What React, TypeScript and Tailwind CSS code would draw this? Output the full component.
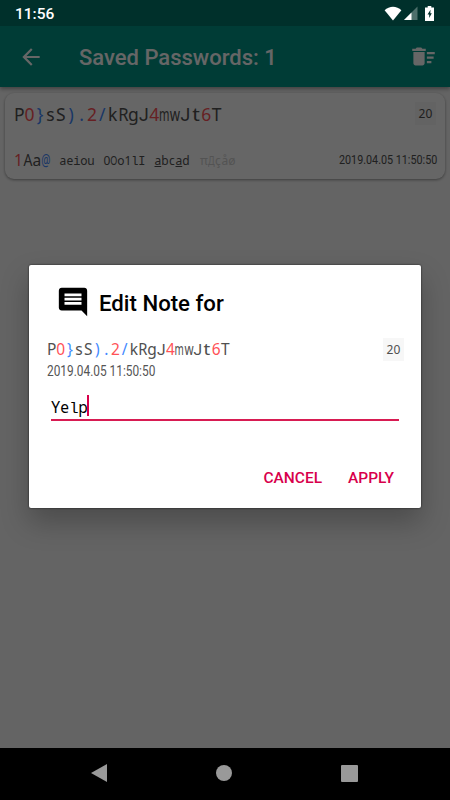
import clsx from "clsx";

const PASSWORD = "P0}sS).2/kRgJ4mwJt6T";

function colorOf(ch: string) {
  if (/[0-9]/.test(ch)) return "text-[#ff5257]";
  if (/[a-zA-Z]/.test(ch)) return "text-[#505050]";
  return "text-[#4389ff]";
}

// wide letters are narrowed so that they stay inside their cell
function shapeOf(ch: string) {
  if (/[lIi]/.test(ch)) return "font-['Liberation_Mono',monospace]";
  if (ch === "J") return "font-[Roboto,sans-serif]";
  if (ch === "m") return "scale-x-[0.64]";
  if (ch === "@") return "scale-x-[0.66]";
  if (/[wOД]/.test(ch)) return "scale-x-[0.75]";
  if (ch === "A") return "scale-x-[0.9]";
  if (ch === "R") return "scale-x-[0.95]";
  if (ch === "t") return "scale-x-[1.2]";
  return "";
}

// every glyph sits in a cell of the same width
function Mono({ text, cell, colored }: { text: string; cell: string; colored?: boolean }) {
  return (
    <span className="flex items-baseline font-['Noto_Sans',sans-serif]">
      {text.split("").map((ch, i) => (
        <span key={i} className={clsx("flex items-baseline justify-center", cell, colored && colorOf(ch))}>
          <span className={clsx("inline-block", shapeOf(ch))}>{ch}</span>
        </span>
      ))}
    </span>
  );
}

function LengthBadge() {
  return (
    <span className="flex h-[23px] w-[21px] items-center justify-center bg-[#f7f7f7] text-[12px] text-[#505050]">
      <Mono text="20" cell="w-[7px]" />
    </span>
  );
}

function StatusBar() {
  return (
    <div className="absolute inset-x-0 top-0 flex h-[26px] items-center justify-between px-[15px]">
      <span className="pt-[2px] text-[15.5px] font-medium leading-[26px] text-white">11:56</span>
      <div className="flex items-center">
        <svg className="h-[15px] w-[18px]" viewBox="0 0 18 15">
          <path d="M9 14.5 0.6 4.2C2.8 2 6 .8 9 .8s6.2 1.2 8.4 3.4z" fill="#fff" />
        </svg>
        <svg className="ml-px h-[15px] w-[15px]" viewBox="0 0 15 15">
          <path d="M14.5 0.5V14H1z" fill="#4d6f6b" />
          <path d="M8.5 6.5V14H1z" fill="#fff" />
        </svg>
        <svg className="ml-[7px] mr-px h-[15px] w-[9px]" viewBox="0 0 9 15">
          <path d="M2.7 0h3.6v1.5H9V15H0V1.5h2.7z" fill="#fff" />
          <path d="M5.5 3.8 2.5 8.6h1.7v3.4l2.600-4.8H5.3z" fill="#00302b" />
        </svg>
      </div>
    </div>
  );
}

function AppBar() {
  return (
    <header className="shadow-[0_2px_4px_rgba(0,0,0,0.35)]">
      <div className="h-[26px] bg-[#00796b]" />
      <div className="flex h-[61px] items-center bg-[#009688] pl-[18px] pr-[13px] text-white">
        <svg className="h-[26px] w-[26px]" viewBox="0 0 24 24" fill="currentColor">
          <path d="M20 11H7.83l5.59-5.59L12 4l-8 8 8 8 1.41-1.41L7.83 13H20v-2z" />
        </svg>
        <h1 className="ml-[35px] flex-1 pt-[2px] text-[22px] font-medium">Saved Passwords: 1</h1>
        <svg className="h-[27px] w-[27px]" viewBox="0 0 24 24" fill="currentColor">
          <path d="M15 16h4v2h-4zm0-8h7v2h-7zm0 4h6v2h-6zM3 18c0 1.1.9 2 2 2h6c1.1 0 2-.9 2-2V8H3v10zM14 5h-3l-1-1H6L5 5H2v2h12z" />
        </svg>
      </div>
    </header>
  );
}

function SavedCard() {
  return (
    <section className="mx-[5px] mt-[6px] flex h-[86px] flex-col justify-between rounded-[9px] bg-white px-[9px] shadow-[0_1px_3px_rgba(0,0,0,0.4)]">
      <div className="flex items-start justify-between pt-[9px]">
        <div className="-mt-px text-[17.5px] leading-[26px]">
          <Mono text={PASSWORD} cell="w-[10.4px]" colored />
        </div>
        <LengthBadge />
      </div>
      <div className="mb-[9px] flex h-[20px] items-center">
        <div className="text-[15.5px] leading-[20px]">
          <Mono text="1Aa@" cell="w-[9.1px]" colored />
        </div>
        <div className="ml-[9px] flex gap-[9px] pt-[2px] text-[12px] leading-[18px] text-[#505050]">
          <Mono text="aeiou" cell="w-[7px]" />
          <Mono text="0Oo1lI" cell="w-[7px]" />
          <span className="flex">
            <Mono text="a" cell="w-[7px] underline" />
            <Mono text="bc" cell="w-[7px]" />
            <Mono text="a" cell="w-[7px] underline" />
            <Mono text="d" cell="w-[7px]" />
          </span>
          <span className="ml-[2px] text-[#d0d0d0]">
            <Mono text="πДçåø" cell="w-[7px]" />
          </span>
        </div>
        <span className="ml-auto w-[97.5px] text-[12.6px] text-[#505050]">
          <span className="inline-block origin-left scale-x-[0.855] whitespace-nowrap">2019.04.05 11:50:50</span>
        </span>
      </div>
    </section>
  );
}

function EditNoteDialog() {
  return (
    <div className="h-[243px] w-[392px] rounded-[2px] bg-white shadow-[0_14px_28px_rgba(0,0,0,0.25),0_0_2px_rgba(0,0,0,0.8)]">
      <div className="flex h-[54px] items-center pl-[27px] pt-[20px]">
        <svg className="h-[34px] w-[34px]" viewBox="0 0 24 24">
          <path d="M21.99 4c0-1.1-.89-2-1.99-2H4c-1.1 0-2 .9-2 2v12c0 1.1.9 2 2 2h14l4 4-.01-18zM18 14H6v-2h12v2zm0-3H6V9h12v2zm0-3H6V6h12v2z" />
        </svg>
        <h2 className="ml-[9px] pt-px text-[22.2px] font-medium leading-[34px] text-black">Edit Note for</h2>
      </div>
      <div className="flex justify-between pl-[18px] pr-[17px] pt-[18px]">
        <div className="pt-px">
          <div className="text-[15.5px] leading-[23px]">
            <Mono text={PASSWORD} cell="w-[9.15px]" colored />
          </div>
          <div className="-mt-px text-[13.8px] leading-[20px] text-[#555]">
            <span className="inline-block origin-left scale-x-[0.86] whitespace-nowrap">2019.04.05 11:50:50</span>
          </div>
        </div>
        <div className="pt-px">
          <LengthBadge />
        </div>
      </div>
      <div className="mx-[22px] mt-[14px] flex h-[26px] border-b-2 border-[#d81b52] text-[15.5px] leading-[24px] text-black">
        <Mono text="Yelp" cell="w-[9.15px]" />
        <span className="-ml-[0.6px] h-[21px] w-[2px] bg-[#d8004b]" />
      </div>
      <div className="mt-[46px] flex justify-end gap-[26px] pr-[27px] text-[15.5px] font-medium leading-[22px] text-[#d8004b]">
        <button>CANCEL</button>
        <button>APPLY</button>
      </div>
    </div>
  );
}

function NavBar() {
  return (
    <nav className="flex h-[52px] items-center justify-between bg-black pb-[2px] pl-[91px] pr-[92px] text-[#999]">
      <svg className="h-[18px] w-[16px]" viewBox="0 0 16 18" fill="currentColor">
        <path d="M16 0v18L0 9z" />
      </svg>
      <span className="h-4 w-4 rounded-full bg-[#999]" />
      <span className="h-[17px] w-[17px] rounded-[1px] bg-[#999]" />
    </nav>
  );
}

export default function App() {
  return (
    <div className="flex h-[800px] w-[450px] flex-col overflow-hidden font-[Roboto,sans-serif]">
      <main className="relative flex-1 bg-[#fafafa]">
        <AppBar />
        <SavedCard />
        <div className="absolute inset-0 bg-black/60" />
        <StatusBar />
        <div className="absolute left-[29px] top-[265px]">
          <EditNoteDialog />
        </div>
      </main>
      <NavBar />
    </div>
  );
}
